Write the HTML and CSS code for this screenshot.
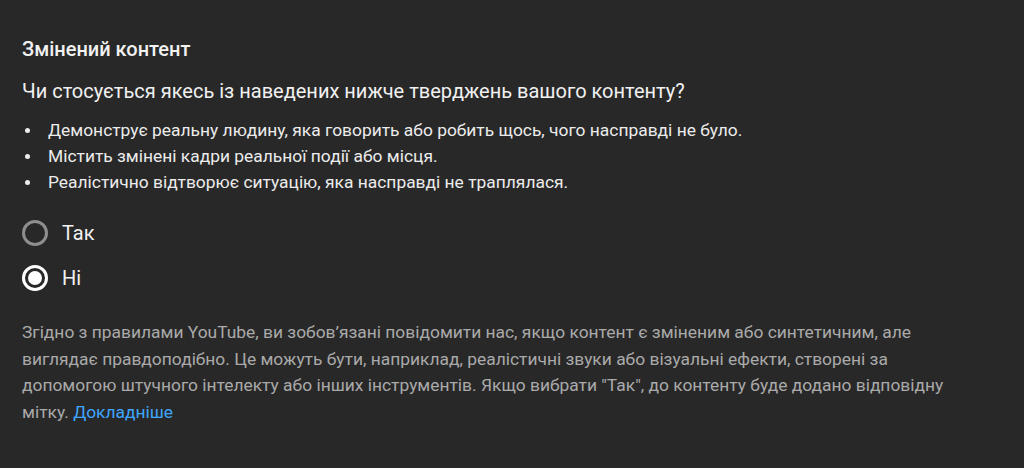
FILE: index.html
```html
<!DOCTYPE html>
<html lang="uk">
<head>
<meta charset="utf-8">
<link rel="stylesheet" href="styles.css">
</head>
<body>
<section class="panel">
  <h2 class="title">Змінений контент</h2>
  <p class="question">Чи стосується якесь із наведених нижче тверджень вашого контенту?</p>
  <ul class="list">
    <li>Демонструє реальну людину, яка говорить або робить щось, чого насправді не було.</li>
    <li>Містить змінені кадри реальної події або місця.</li>
    <li>Реалістично відтворює ситуацію, яка насправді не траплялася.</li>
  </ul>
  <div class="radios">
    <label class="radio"><span class="ring"></span><span class="label">Так</span></label>
    <label class="radio checked"><span class="ring"></span><span class="label">Ні</span></label>
  </div>
  <p class="note">Згідно з правилами YouTube, ви зобов’язані повідомити нас, якщо контент є зміненим або синтетичним, але виглядає правдоподібно. Це можуть бути, наприклад, реалістичні звуки або візуальні ефекти, створені за допомогою штучного інтелекту або інших інструментів. Якщо вибрати "Так", до контенту буде додано відповідну мітку. <a class="link" href="#">Докладніше</a></p>
</section>
</body>
</html>
```
FILE: styles.css
```css
html, body {
  margin: 0;
  padding: 0;
  background: #282828;
  height: 100%;
}
body {
  font-family: Roboto, "Noto Sans", sans-serif;
  color: #f1f1f1;
}
.panel {
  padding: 37px 22px 0 22px;
}
.title {
  margin: 0;
  font-size: 20px;
  font-weight: 500;
  line-height: 24px;
  color: #f1f1f1;
}
.question {
  margin: 18px 0 0 0;
  font-size: 20px;
  line-height: 24px;
  color: #f1f1f1;
}
.list {
  list-style: none;
  margin: 14px 0 0 0;
  padding: 0;
  font-size: 17.4px;
  line-height: 26px;
  color: #ececec;
}
.list li {
  display: flex;
  align-items: flex-start;
}
.list li::before {
  content: "";
  flex: none;
  width: 5px;
  height: 5px;
  border-radius: 50%;
  background: #ececec;
  margin: 11px 18px 0 3px;
}
.radios {
  display: flex;
  flex-direction: column;
  gap: 19px;
  margin-top: 25px;
}
.radio {
  display: flex;
  align-items: center;
  gap: 14px;
  height: 26px;
}
.ring {
  box-sizing: border-box;
  width: 26px;
  height: 26px;
  border-radius: 50%;
  border: 3px solid #8e8e8e;
  display: flex;
  align-items: center;
  justify-content: center;
}
.checked .ring {
  border-color: #ffffff;
}
.checked .ring::after {
  content: "";
  width: 14px;
  height: 14px;
  border-radius: 50%;
  background: #ffffff;
}
.label {
  font-size: 20px;
  color: #f1f1f1;
}
.note {
  width: 928px;
  margin: 28px 0 0 0;
  font-size: 17.4px;
  line-height: 26.6px;
  color: #aaaaaa;
}
.link {
  color: #3ea6ff;
  text-decoration: none;
}
```
